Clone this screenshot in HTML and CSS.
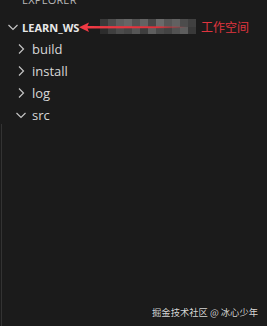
FILE: index.html
```html
<!DOCTYPE html>
<html>
<head>
<meta charset="utf-8">
<link rel="stylesheet" href="styles.css">
</head>
<body>
<div class="panel">
  <div class="header">EXPLORER</div>
  <div class="tree">
    <div class="row root">
      <span class="chev"><svg width="16" height="16" viewBox="0 0 16 16"><path d="M3.5 6 L8 10.5 L12.5 6" fill="none" stroke="#c5c5c5" stroke-width="1.2"/></svg></span>
      <span class="label bold">LEARN_WS</span>
    </div>
    <div class="row l1">
      <span class="chev"><svg width="16" height="16" viewBox="0 0 16 16"><path d="M6 3.5 L10.5 8 L6 12.5" fill="none" stroke="#c5c5c5" stroke-width="1.2"/></svg></span>
      <span class="label">build</span>
    </div>
    <div class="row l1">
      <span class="chev"><svg width="16" height="16" viewBox="0 0 16 16"><path d="M6 3.5 L10.5 8 L6 12.5" fill="none" stroke="#c5c5c5" stroke-width="1.2"/></svg></span>
      <span class="label">install</span>
    </div>
    <div class="row l1">
      <span class="chev"><svg width="16" height="16" viewBox="0 0 16 16"><path d="M6 3.5 L10.5 8 L6 12.5" fill="none" stroke="#c5c5c5" stroke-width="1.2"/></svg></span>
      <span class="label">log</span>
    </div>
    <div class="row l1">
      <span class="chev"><svg width="16" height="16" viewBox="0 0 16 16"><path d="M3.5 6 L8 10.5 L12.5 6" fill="none" stroke="#c5c5c5" stroke-width="1.2"/></svg></span>
      <span class="label">src</span>
    </div>
  </div>
  <div class="guide"></div>
  <div class="mosaic">
    <i style="background:#3a3a3a"></i><i style="background:#4d4d4d"></i><i style="background:#5e5e5e"></i><i style="background:#666"></i><i style="background:#525252"></i><i style="background:#636363"></i><i style="background:#474747"></i><i style="background:#6a6a6a"></i><i style="background:#565656"></i><i style="background:#616161"></i><i style="background:#4c4c4c"></i><i style="background:#404040"></i>
    <i style="background:#2c2c2c"></i><i style="background:#3f3f3f"></i><i style="background:#4c4c4c"></i><i style="background:#454545"></i><i style="background:#565656"></i><i style="background:#3e3e3e"></i><i style="background:#5e5e5e"></i><i style="background:#4a4a4a"></i><i style="background:#434343"></i><i style="background:#525252"></i><i style="background:#5d5d5d"></i><i style="background:#393939"></i>
  </div>
  <svg class="arrow" width="110" height="12" viewBox="0 0 110 12">
    <defs>
      <linearGradient id="g" x1="0" x2="1" y1="0" y2="0">
        <stop offset="0" stop-color="#f03a44"/>
        <stop offset="0.7" stop-color="#e0303a"/>
        <stop offset="1" stop-color="#e0303a" stop-opacity="0"/>
      </linearGradient>
    </defs>
    <path d="M8 5 L108 5.5 L108 7 L8 7.5 Z" fill="url(#g)"/>
    <path d="M0 6.2 L10 1.5 L8 6.2 L10 11 Z" fill="#f03a44"/>
  </svg>
  <div class="note">工作空间</div>
  <div class="watermark">掘金技术社区 @ 冰心少年</div>
</div>
</body>
</html>
```
FILE: styles.css
```css
html, body {
  margin: 0;
  padding: 0;
  background: #1b1b1b;
}
.panel {
  position: relative;
  width: 267px;
  height: 326px;
  overflow: hidden;
  background: #1b1b1b;
  font-family: "Open Sans", "Noto Sans", sans-serif;
  color: #cccccc;
}
.header {
  height: 16px;
  font-size: 11px;
  line-height: 11px;
  padding-left: 22px;
  margin-top: -6px;
  color: #b8b8b8;
  letter-spacing: 0.2px;
}
.tree {
  margin-top: 6px;
  display: flex;
  flex-direction: column;
}
.row {
  height: 22px;
  display: flex;
  align-items: center;
}
.row.root { padding-left: 5px; }
.row.l1 { padding-left: 13px; }
.chev {
  width: 16px;
  height: 16px;
  display: flex;
}
.label {
  font-size: 13px;
  color: #d8d8d8;
  padding-left: 2px;
}
.row.l1 .label { padding-left: 3px; }
.bold {
  font-weight: 700;
  font-size: 11px;
  color: #e8e8e8;
  padding-left: 1px;
}
.guide {
  position: absolute;
  left: 1px;
  top: 124px;
  bottom: 0;
  width: 1px;
  background: #333;
}
.mosaic {
  position: absolute;
  left: 100px;
  top: 19px;
  width: 96px;
  height: 15px;
  display: grid;
  grid-template-columns: repeat(12, 8px);
  grid-template-rows: 8px 7px;
}
.mosaic i { display: block; }
.arrow {
  position: absolute;
  left: 79px;
  top: 21px;
}
.note {
  position: absolute;
  left: 201px;
  top: 19px;
  font-family: "Noto Sans CJK SC", sans-serif;
  font-size: 12px;
  line-height: 16px;
  color: #e0353f;
}
.watermark {
  position: absolute;
  right: 9px;
  bottom: 8px;
  font-family: "Noto Sans CJK SC", sans-serif;
  font-size: 9.3px;
  line-height: 12px;
  color: #d8d8d8;
  text-shadow: 0 0 1px #000;
}
```
